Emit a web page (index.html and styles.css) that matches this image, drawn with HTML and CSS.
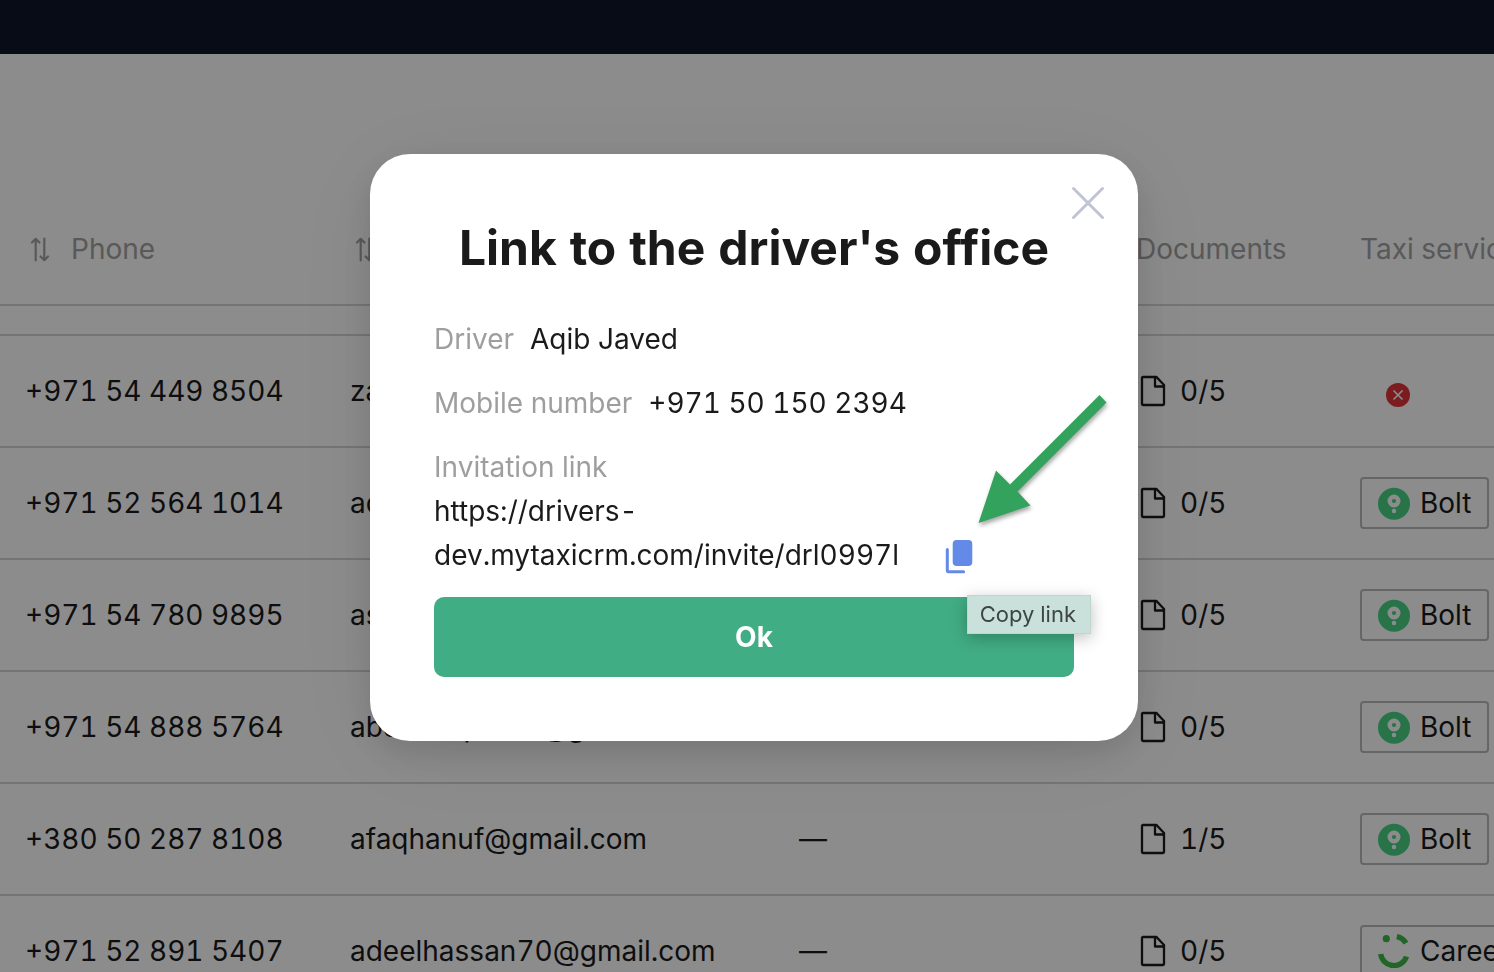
FILE: index.html
```html
<!DOCTYPE html>
<html lang="en">
<head>
<meta charset="utf-8">
<title>Drivers</title>
<link rel="stylesheet" href="styles.css">
</head>
<body>
<svg class="sprite" aria-hidden="true">
  <symbol id="sort" viewBox="0 0 28 28">
    <path d="M10.700 25.500V4M7 7.500l3.700-3.700 3.700 3.700M19.300 3.500v21.500M15.600 21.500l3.700 3.700 3.700-3.700" fill="none" stroke="currentColor" stroke-width="2.200" stroke-linecap="round" stroke-linejoin="round"/>
  </symbol>
  <symbol id="file" viewBox="0 0 34 34">
    <path d="M7 3h13.500L28 11v19q0 1-1 1H7q-1 0-1-1V4q0-1 1-1zM19 3v9.500h9" fill="none" stroke="currentColor" stroke-width="2.300" stroke-linejoin="round"/>
  </symbol>
  <symbol id="bolt" viewBox="0 0 32 34">
    <circle cx="16" cy="17.800" r="16" fill="#4ad182"/>
    <circle cx="16" cy="15" r="4.300" fill="none" stroke="#fff" stroke-width="4.400"/>
    <circle cx="16" cy="25" r="2.200" fill="#fff"/>
  </symbol>
  <symbol id="careem" viewBox="0 0 32 34">
    <circle cx="8.300" cy="4.700" r="3.600" fill="#3eb94c"/>
    <path d="M18.800 2.600A14 14 0 0 1 28 9.200M2.700 20A13.300 13.300 0 0 0 28.500 22.500" fill="none" stroke="#3eb94c" stroke-width="5.400"/>
  </symbol>
</svg>

<header class="topbar"></header>
<main class="content">
  <table class="drivers">
    <colgroup><col class="c-phone"><col class="c-mail"><col class="c-note"><col class="c-docs"><col></colgroup>
    <thead>
      <tr>
        <th><div class="cell head"><svg class="sort"><use href="#sort"/></svg>Phone</div></th>
        <th><div class="cell head"><svg class="sort"><use href="#sort"/></svg></div></th>
        <th></th>
        <th>Documents</th>
        <th>Taxi services</th>
      </tr>
    </thead>
    <tbody>
      <tr class="gap"><td colspan="5"></td></tr>
      <tr>
        <td>+971 54 449 8504</td><td>zahi</td><td></td>
        <td><div class="cell docs"><svg class="file"><use href="#file"/></svg>0/5</div></td>
        <td><svg class="none" viewBox="0 0 24 24"><circle cx="12" cy="12" r="12" fill="#e03538"/><path d="M7.500 7.500l9 9M16.500 7.500l-9 9" stroke="#fff" stroke-width="1.600"/></svg></td>
      </tr>
      <tr>
        <td>+971 52 564 1014</td><td>adna</td><td></td>
        <td><div class="cell docs"><svg class="file"><use href="#file"/></svg>0/5</div></td>
        <td><span class="tag"><svg><use href="#bolt"/></svg>Bolt</span></td>
      </tr>
      <tr>
        <td>+971 54 780 9895</td><td>asad</td><td></td>
        <td><div class="cell docs"><svg class="file"><use href="#file"/></svg>0/5</div></td>
        <td><span class="tag"><svg><use href="#bolt"/></svg>Bolt</span></td>
      </tr>
      <tr>
        <td>+971 54 888 5764</td><td>abdulmapoore@gmail.com</td><td></td>
        <td><div class="cell docs"><svg class="file"><use href="#file"/></svg>0/5</div></td>
        <td><span class="tag"><svg><use href="#bolt"/></svg>Bolt</span></td>
      </tr>
      <tr>
        <td>+380 50 287 8108</td><td>afaqhanuf@gmail.com</td><td>—</td>
        <td><div class="cell docs"><svg class="file"><use href="#file"/></svg>1/5</div></td>
        <td><span class="tag"><svg><use href="#bolt"/></svg>Bolt</span></td>
      </tr>
      <tr>
        <td>+971 52 891 5407</td><td>adeelhassan70@gmail.com</td><td>—</td>
        <td><div class="cell docs"><svg class="file"><use href="#file"/></svg>0/5</div></td>
        <td><span class="tag"><svg><use href="#careem"/></svg>Careem</span></td>
      </tr>
    </tbody>
  </table>
</main>

<div class="mask">
  <section class="modal" role="dialog" aria-modal="true" aria-labelledby="title">
    <button class="close" aria-label="Close"><svg viewBox="0 0 36 36"><path d="M3.500 3.500l29 29M32.500 3.500l-29 29" stroke="#c0c4d4" stroke-width="3" stroke-linecap="round"/></svg></button>
    <h1 id="title">Link to the driver's office</h1>
    <div class="info">
      <p><span class="label">Driver</span>Aqib Javed</p>
      <p><span class="label">Mobile number</span>+971 50 150 2394</p>
      <div>
        <div class="label">Invitation link</div>
        <div class="invite">
          <a class="url" href="#">https://drivers-dev.mytaxicrm.com/invite/drl0997l</a>
          <button class="copy" aria-label="Copy link"><svg viewBox="0 0 34 44"><rect x="10.700" y="7" width="19.600" height="26" rx="4" fill="#628ae6"/><path d="M5.300 16.500v21q0 1.300 1.300 1.300h15" fill="none" stroke="#628ae6" stroke-width="3" stroke-linecap="round"/></svg></button>
        </div>
      </div>
    </div>
    <button class="ok">Ok</button>
    <svg class="arrow" viewBox="0 0 140 140"><path d="M129.500 14L136.500 21.500 47.500 110.500 60.500 124.500 8.500 142 26 89.500 40 103.500z" fill="#33a25c"/></svg>
    <div class="tooltip" role="tooltip">Copy link</div>
  </section>
</div>
</body>
</html>
```
FILE: styles.css
```css
* { box-sizing: border-box; }

body {
  margin: 0;
  height: 100vh;
  overflow: hidden;
  background: #fff;
  color: #1a1a1a;
  font: 28px/44px Inter, "Liberation Sans", sans-serif;
  font-variant-numeric: tabular-nums;
}

button {
  border: 0;
  padding: 0;
  background: none;
  font: inherit;
  cursor: pointer;
}

svg { display: block; flex: none; }
.sprite { position: absolute; width: 0; height: 0; }

.topbar { height: 54px; background: #0e1628; }
.content { padding-top: 140px; overflow: hidden; }

.drivers {
  width: 100%;
  table-layout: fixed;
  border-collapse: separate;
  border-spacing: 0;
  white-space: nowrap;
}
.c-phone { width: 325px; }
.c-mail { width: 449px; }
.c-note { width: 337px; }
.c-docs { width: 224px; }

.drivers th,
.drivers td {
  height: 112px;
  padding: 0 0 0 25px;
  border-bottom: 2px solid #d5d5d5;
  text-align: left;
  font-weight: 400;
}
.drivers th { color: #a2a2a2; }
.drivers .gap td { height: 30px; }

.cell { display: flex; align-items: center; }
.head { gap: 18px; }
.docs { gap: 10px; }
.sort { width: 28px; height: 28px; }
.file { width: 34px; height: 34px; }
.none { width: 24px; height: 24px; margin: 8px 0 0 26px; }

.tag {
  display: inline-flex;
  align-items: center;
  gap: 10px;
  height: 52px;
  padding: 0 16px;
  border: 2px solid #bababa;
  border-radius: 4px;
  vertical-align: middle;
}
.tag svg { width: 32px; height: 34px; }

.mask {
  position: fixed;
  inset: 0;
  padding: 154px 0 0 14px;
  background: rgba(0, 0, 0, .45);
}

.modal {
  position: relative;
  width: 768px;
  margin: 0 auto;
  padding: 64px;
  border-radius: 40px;
  background: #fff;
  box-shadow: 0 12px 32px rgba(0, 0, 0, .12), 0 12px 96px rgba(0, 0, 0, .08);
}

.modal h1 {
  margin: 0 0 39px;
  font-size: 48px;
  line-height: 60px;
  font-weight: 700;
  text-align: center;
  white-space: nowrap;
}

.close { position: absolute; top: 31px; right: 32px; }
.close svg { width: 36px; height: 36px; }

.info { display: grid; gap: 20px; }
.info p { margin: 0; }
.label { color: #9e9e9e; }
p .label { margin-right: 16px; }

.invite { display: flex; align-items: flex-end; gap: 28px; }
.url { width: 480px; color: inherit; text-decoration: none; }
.copy svg { width: 34px; height: 44px; }

.ok {
  display: block;
  width: 100%;
  height: 80px;
  margin-top: 20px;
  border-radius: 10px;
  background: #41ad84;
  color: #fff;
  font-weight: 700;
}

.arrow {
  position: absolute;
  top: 227px;
  right: 28px;
  width: 140px;
  height: 140px;
  overflow: visible;
  filter: drop-shadow(1px 3px 2px rgba(0, 0, 0, .35));
}

.tooltip {
  position: absolute;
  right: 47px;
  bottom: 107px;
  padding: 0 14px 0 12px;
  border: 1px solid #c1d5cf;
  background: #cae0da;
  color: #3c4643;
  font-size: 22px;
  line-height: 37px;
  box-shadow: 0 4px 16px rgba(0, 0, 0, .25);
}
```
